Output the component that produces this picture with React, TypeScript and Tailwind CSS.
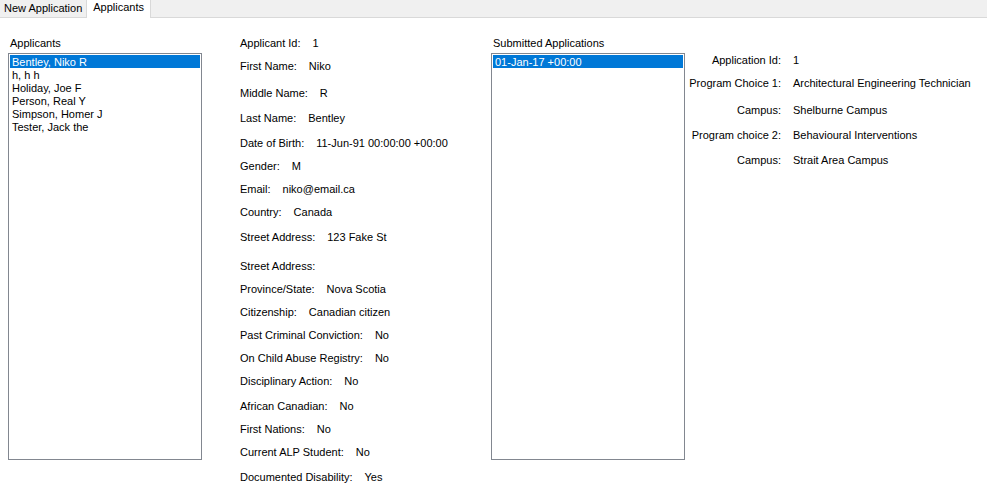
import { useState } from "react";

type Field = { label: string; value: string; gap: string };

const people = [
  "Bentley, Niko R",
  "h, h h",
  "Holiday, Joe F",
  "Person, Real Y",
  "Simpson, Homer J",
  "Tester, Jack the",
];

const applicantFields: Field[] = [
  { label: "Applicant Id:", value: "1", gap: "pt-0" },
  { label: "First Name:", value: "Niko", gap: "pt-2.5" },
  { label: "Middle Name:", value: "R", gap: "pt-3.5" },
  { label: "Last Name:", value: "Bentley", gap: "pt-3" },
  { label: "Date of Birth:", value: "11-Jun-91 00:00:00 +00:00", gap: "pt-3" },
  { label: "Gender:", value: "M", gap: "pt-2.5" },
  { label: "Email:", value: "niko@email.ca", gap: "pt-2.5" },
  { label: "Country:", value: "Canada", gap: "pt-2.5" },
  { label: "Street Address:", value: "123 Fake St", gap: "pt-3" },
  { label: "Street Address:", value: "", gap: "pt-4" },
  { label: "Province/State:", value: "Nova Scotia", gap: "pt-2.5" },
  { label: "Citizenship:", value: "Canadian citizen", gap: "pt-2.5" },
  { label: "Past Criminal Conviction:", value: "No", gap: "pt-2.5" },
  { label: "On Child Abuse Registry:", value: "No", gap: "pt-2.5" },
  { label: "Disciplinary Action:", value: "No", gap: "pt-2.5" },
  { label: "African Canadian:", value: "No", gap: "pt-3" },
  { label: "First Nations:", value: "No", gap: "pt-2.5" },
  { label: "Current ALP Student:", value: "No", gap: "pt-2.5" },
  { label: "Documented Disability:", value: "Yes", gap: "pt-3" },
];

const applicationFields: Field[] = [
  { label: "Application Id:", value: "1", gap: "pt-0" },
  { label: "Program Choice 1:", value: "Architectural Engineering Technician", gap: "pt-2.5" },
  { label: "Campus:", value: "Shelburne Campus", gap: "pt-3.5" },
  { label: "Program choice 2:", value: "Behavioural Interventions", gap: "pt-3" },
  { label: "Campus:", value: "Strait Area Campus", gap: "pt-3" },
];

function ListBox({ id, label, items }: { id: string; label: string; items: string[] }) {
  const [selected, setSelected] = useState(items[0]);
  return (
    <div className="flex flex-col">
      <label htmlFor={id} className="pl-0.5">
        {label}
      </label>
      <select
        id={id}
        size={20}
        value={selected}
        onChange={(e) => setSelected(e.target.value)}
        className="mt-[3px] h-[407px] w-full appearance-none overflow-hidden rounded-none border border-[#828790] bg-white p-px outline-none"
      >
        {items.map((item) => (
          <option
            key={item}
            value={item}
            className="h-[13px] min-h-0 px-0.5 pt-px pb-0 leading-[13px] text-black checked:bg-[#0078d7] checked:bg-linear-to-r checked:from-[#0078d7] checked:to-[#0078d7] checked:text-white"
          >
            {item}
          </option>
        ))}
      </select>
    </div>
  );
}

export default function App() {
  const [tab, setTab] = useState("Applicants");
  return (
    <div className="min-h-screen bg-white font-['Liberation_Sans',Arial,sans-serif] text-[11px] leading-[13px] text-black">
      <div role="tablist" className="flex h-[18px] bg-[#f0f0f0]">
        {["New Application", "Applicants"].map((name) => (
          <button
            key={name}
            type="button"
            role="tab"
            aria-selected={tab === name}
            onClick={() => setTab(name)}
            className={
              tab === name
                ? "border-x border-[#d9d9d9] bg-white px-1.5 pb-1"
                : "border-b border-[#d9d9d9] px-1"
            }
          >
            {name}
          </button>
        ))}
        <div className="flex-1 border-b border-[#d9d9d9]" />
      </div>
      <main className="grid grid-cols-[194px_minmax(0,289fr)_194px_minmax(0,302fr)] pt-[19px] pl-2">
        <ListBox id="applicants" label="Applicants" items={people} />
        <dl className="pl-[38px]">
          {applicantFields.map((f, i) => (
            <div key={i} className={`flex gap-3 ${f.gap}`}>
              <dt>{f.label}</dt>
              <dd>{f.value}</dd>
            </div>
          ))}
        </dl>
        <ListBox id="applications" label="Submitted Applications" items={["01-Jan-17 +00:00"]} />
        <dl className="pt-[17px]">
          {applicationFields.map((f, i) => (
            <div key={i} className={`grid grid-cols-[96px_minmax(0,1fr)] gap-3 ${f.gap}`}>
              <dt className="text-right">{f.label}</dt>
              <dd>{f.value}</dd>
            </div>
          ))}
        </dl>
      </main>
    </div>
  );
}
